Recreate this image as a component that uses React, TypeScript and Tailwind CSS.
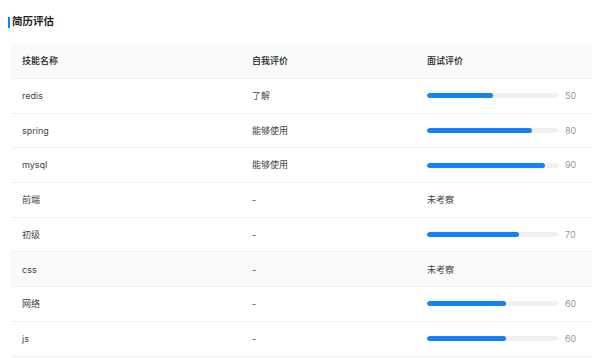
import React from "react";

type Row = { name: string; self: string; score: number | null; hover?: boolean };

const rows: Row[] = [
  { name: "redis", self: "了解", score: 50 },
  { name: "spring", self: "能够使用", score: 80 },
  { name: "mysql", self: "能够使用", score: 90 },
  { name: "前端", self: "-", score: null },
  { name: "初级", self: "-", score: 70 },
  { name: "css", self: "-", score: null, hover: true },
  { name: "网络", self: "-", score: 60 },
  { name: "js", self: "-", score: 60 },
];

export default function App() {
  return (
    <div
      className="w-[600px] h-[358px] overflow-hidden bg-white text-[#333]"
      style={{ fontFamily: '"Inter", "Noto Sans CJK SC", sans-serif' }}
    >
      <div className="flex items-center pl-[8px] pt-[14px] h-[30px]">
        <div className="w-[2px] h-[11px] bg-[#1282f7]" />
        <div className="ml-[2px] text-[10.5px] font-bold leading-none text-[#222]">简历评估</div>
      </div>
      <div className="ml-[11px] mr-[8px] mt-[14px]">
        <div className="grid grid-cols-[230px_175px_1fr] h-[35px] items-center bg-[#fafafa] border-b border-[#f0f0f0] text-[9px] font-medium text-[#222]">
          <div className="pl-[11px]">技能名称</div>
          <div className="pl-[11px]">自我评价</div>
          <div className="pl-[11px]">面试评价</div>
        </div>
        {rows.map((r) => (
          <div
            key={r.name}
            className={`grid grid-cols-[230px_175px_1fr] h-[34.7px] items-center border-b border-[#f0f0f0] text-[9px] text-[#444] ${r.hover ? "bg-[#fafafa]" : ""}`}
          >
            <div className="pl-[11px]">{r.name}</div>
            <div className="pl-[11px]">{r.self}</div>
            <div className="pl-[11px]">
              {r.score === null ? (
                "未考察"
              ) : (
                <div className="flex items-center">
                  <div className="w-[131px] h-[5px] rounded-full bg-[#f0f0f0] overflow-hidden">
                    <div className="h-full rounded-full bg-[#1282f7]" style={{ width: `${r.score}%` }} />
                  </div>
                  <span className="ml-[7px] text-[9px] text-[#999]">{r.score}</span>
                </div>
              )}
            </div>
          </div>
        ))}
      </div>
    </div>
  );
}
